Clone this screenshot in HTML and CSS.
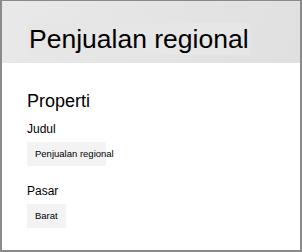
FILE: index.html
```html
<!DOCTYPE html>
<html lang="id">
<head>
    <meta charset="UTF-8">
    <meta name="viewport" content="width=device-width, initial-scale=1.0">
    <title>Penjualan regional</title>
    <link rel="stylesheet" href="styles.css">
</head>
<body>
    <div class="panel">
        <div class="header">
            <h1 class="judul-besar">Penjualan regional</h1>
        </div>
        <div class="isi">
            <h2>Properti</h2>
            <div class="field">
                <div class="label">Judul</div>
                <div class="nilai nilai-lebar">Penjualan regional</div>
            </div>
            <div class="field">
                <div class="label">Pasar</div>
                <div class="nilai">Barat</div>
            </div>
        </div>
    </div>
</body>
</html>
```

FILE: styles.css
```css
html, body {
    margin: 0;
    padding: 0;
}
body {
    font-family: "Liberation Sans", Arial, sans-serif;
    background-color: #fff;
    color: #000;
}
.panel {
    width: 302px;
    height: 252px;
    border: 2px solid #8a8a8a;
    border-top-width: 1px;
    box-sizing: border-box;
    overflow: hidden;
}
.header {
    height: 62px;
    padding: 22px 0 0 25px;
    box-sizing: border-box;
    background: linear-gradient(120deg, #e9e9e9 0%, #e4e4e4 50%, #e0e0e0 100%);
}
.judul-besar {
    display: inline-block;
    margin: 0;
    padding: 1px 2px;
    font-size: 26.5px;
    font-weight: normal;
    line-height: 30px;
    background-color: #e6e6e6;
}
.isi {
    padding: 28px 0 0 25px;
}
h2 {
    margin: 0 0 11px 0;
    font-size: 18px;
    font-weight: normal;
    line-height: 20px;
}
.field {
    margin-bottom: 18px;
}
.label {
    font-size: 12px;
    line-height: 14px;
    margin-bottom: 6px;
}
.nilai {
    display: inline-block;
    background-color: #f3f3f3;
    font-size: 9.5px;
    line-height: 24px;
    padding: 0 8px;
}
.nilai-lebar {
    width: 63px;
    white-space: nowrap;
}
```
